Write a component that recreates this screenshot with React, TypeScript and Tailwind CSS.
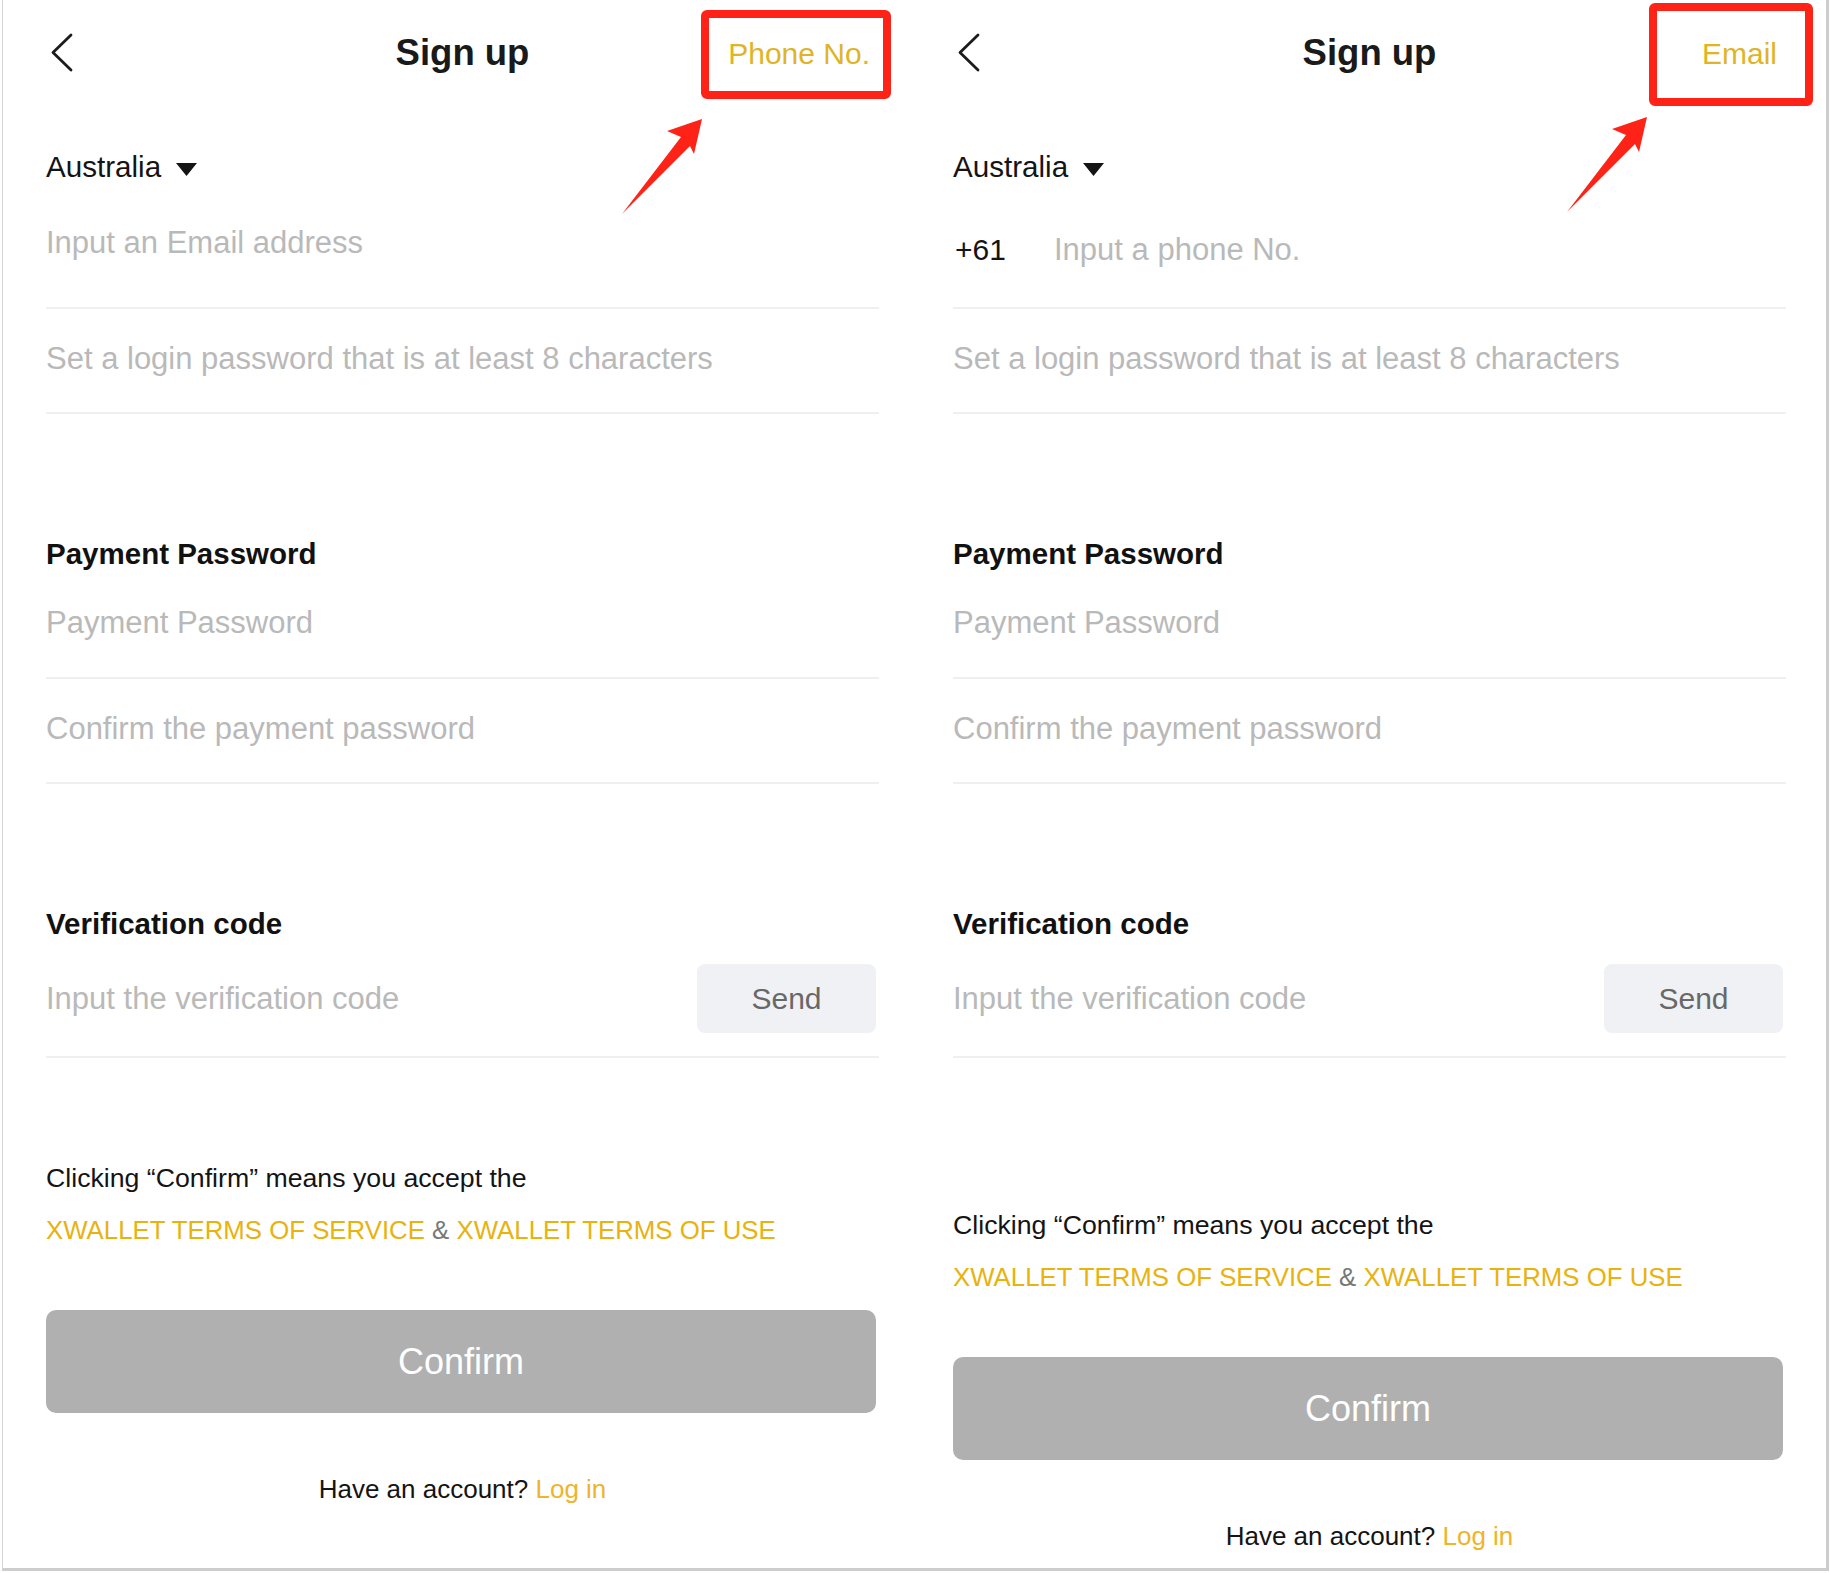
import React from 'react';

type Mode = 'email' | 'phone';

const Chevron: React.FC = () => (
  <svg width="24" height="40" viewBox="0 0 24 40" fill="none">
    <path d="M21 2 L3 19.5 L21 37" stroke="#1c1c1c" strokeWidth="2.8" strokeLinecap="round" strokeLinejoin="round" />
  </svg>
);

const Caret: React.FC = () => (
  <svg className="mt-[5px]" width="21" height="13" viewBox="0 0 21 13">
    <polygon points="0,0 21,0 10.5,13" fill="#141414" />
  </svg>
);

// 红色标注箭头（截图上的批注）
const RedArrow: React.FC<{ className: string }> = ({ className }) => (
  <svg className={className} width="100" height="110" viewBox="0 0 100 110">
    <polygon points="9,104 68,27 54,21 89,9 81,44 77,36" fill="#ff2216" />
  </svg>
);

const Field: React.FC<{ className: string; children: React.ReactNode }> = ({ className, children }) => (
  <div className={`border-b-2 border-[#efefef] text-[31px] leading-[36px] text-[#b9b9b9] ${className}`}>{children}</div>
);

const Label: React.FC<{ children: React.ReactNode }> = ({ children }) => (
  <div className="mt-[122px] text-[29.5px] font-bold leading-[36px] text-[#111111]">{children}</div>
);

const SignUpPanel: React.FC<{ mode: Mode }> = ({ mode }) => {
  const isEmail = mode === 'email';
  return (
    <div className="relative h-full w-[907px] pl-[43px]">
      <div className="w-[833px]">
        {/* 顶部导航 */}
        <div className="grid h-[106px] grid-cols-[1fr_auto_1fr] items-center">
          <div className="ml-[4px] flex items-center">
            <Chevron />
          </div>
          <div className="text-[36.5px] font-bold text-[#1a1a1a]">Sign up</div>
          <div className="pr-[9px] text-right text-[30px] text-[#dfb426]">{isEmail ? 'Phone No.' : 'Email'}</div>
        </div>

        {/* 国家 */}
        <div className="mt-[43px] flex items-center gap-[15px] text-[29.6px] leading-[36px] text-[#141414]">
          <span>Australia</span>
          <Caret />
        </div>

        {isEmail ? (
          <Field className="mt-[40px] pb-[46px]">Input an Email address</Field>
        ) : (
          <Field className="mt-[47px] flex pb-[39px]">
            <span className="w-[101px] pl-[2px] text-[30px] text-[#141414]">+61</span>
            <span>Input a phone No.</span>
          </Field>
        )}
        <Field className="pt-[32px] pb-[35px]">Set a login password that is at least 8 characters</Field>

        {/* 支付密码 */}
        <Label>Payment Password</Label>
        <Field className="mt-[33px] pb-[36px]">Payment Password</Field>
        <Field className="pt-[32px] pb-[35px]">Confirm the payment password</Field>

        {/* 验证码 */}
        <Label>Verification code</Label>
        <Field className="mt-[22px] flex items-center justify-between pb-[23px]">
          <span>Input the verification code</span>
          <button className="mr-[3px] flex h-[69px] w-[179px] items-center justify-center rounded-[8px] bg-[#eff1f4] text-[30px] text-[#686868]">
            Send
          </button>
        </Field>

        {/* 条款 */}
        <div className={`${isEmail ? 'mt-[104px]' : 'mt-[151px]'} text-[26.7px] leading-[32px] text-[#141414]`}>
          Clicking “Confirm” means you accept the
        </div>
        <div className="mt-[20px] text-[25.8px] leading-[32px] text-[#e8b20f]">
          XWALLET TERMS OF SERVICE <span className="text-[#777777]">&amp;</span> XWALLET TERMS OF USE
        </div>

        <button className="mt-[64px] flex h-[103px] w-[830px] items-center justify-center rounded-[10px] bg-[#b0b0b0] text-[36px] text-white">
          Confirm
        </button>

        <div className="mt-[60px] text-center text-[26px] leading-[32px] text-[#141414]">
          Have an account? <span className="text-[#efb42a]">Log in</span>
        </div>
      </div>

      {/* 红框与箭头标注 */}
      {isEmail ? (
        <>
          <div className="absolute left-[698px] top-[10px] h-[89px] w-[190px] rounded-[6px] border-[8px] border-[#ff2216]" />
          <RedArrow className="absolute left-[610px] top-[110px]" />
        </>
      ) : (
        <>
          <div className="absolute left-[739px] top-[3px] h-[103px] w-[164px] rounded-[6px] border-[8px] border-[#ff2216]" />
          <RedArrow className="absolute left-[648px] top-[108px]" />
        </>
      )}
    </div>
  );
};

const App: React.FC = () => {
  return (
    <div className="h-[1573px] w-[1830px] bg-white font-['Liberation_Sans',Arial,sans-serif]">
      <div className="ml-[2px] flex h-[1571px] w-[1827px] border-b-[3px] border-l border-r-[3px] border-b-[#cdcdcd] border-l-[#d6d6d6] border-r-[#cdcdcd]">
        <SignUpPanel mode="email" />
        <SignUpPanel mode="phone" />
      </div>
    </div>
  );
};

export default App;
